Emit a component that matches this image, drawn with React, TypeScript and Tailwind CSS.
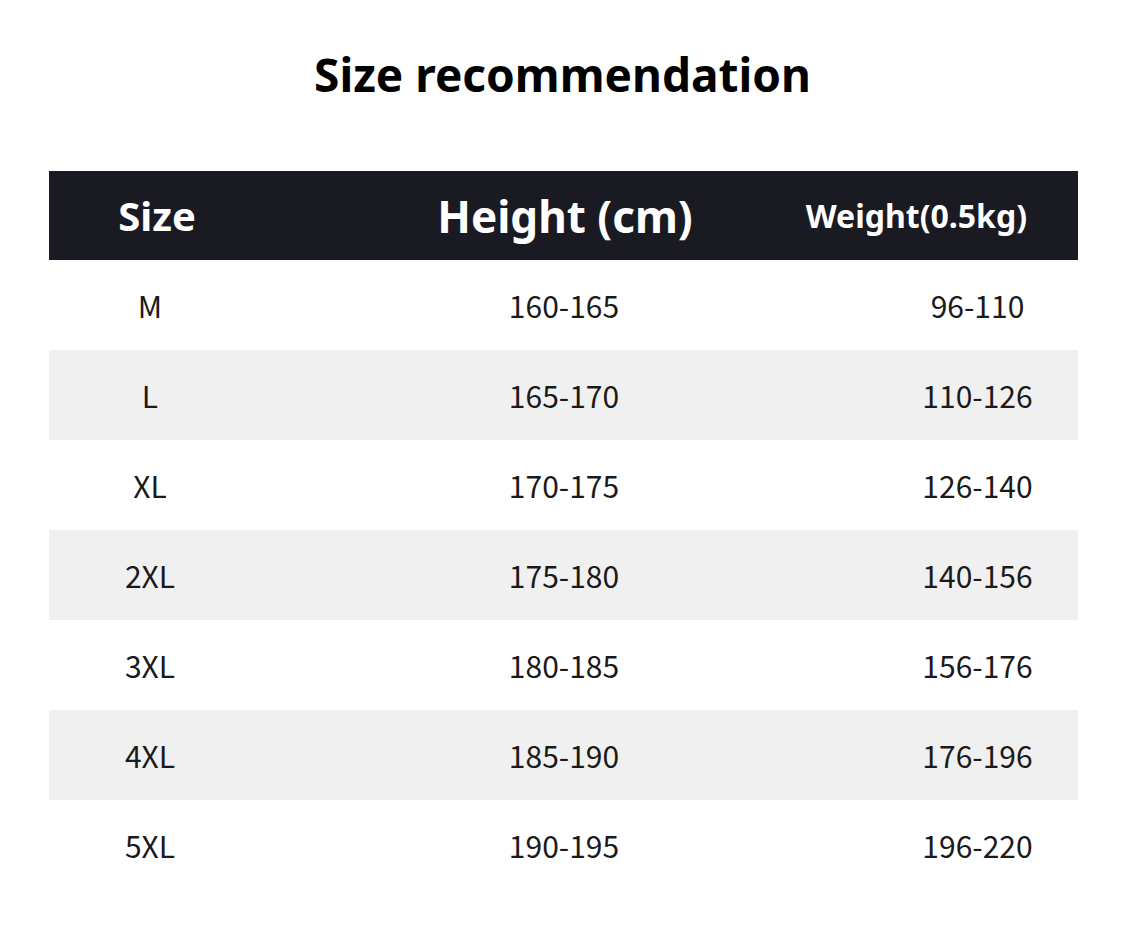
const rows = [
  { size: "M", height: "160-165", weight: "96-110" },
  { size: "L", height: "165-170", weight: "110-126" },
  { size: "XL", height: "170-175", weight: "126-140" },
  { size: "2XL", height: "175-180", weight: "140-156" },
  { size: "3XL", height: "180-185", weight: "156-176" },
  { size: "4XL", height: "185-190", weight: "176-196" },
  { size: "5XL", height: "190-195", weight: "196-220" },
]

const App = () => {
  return (
    <div className="w-[1125px] h-[937px] bg-white pt-[51px]">
      {/* Title */}
      <h1 className="text-center font-['Noto_Sans',sans-serif] font-bold text-[46px] leading-[46px] text-black">
        Size recommendation
      </h1>

      <div className="ml-[49px] mt-[74px] w-[1029px]">
        {/* Header */}
        <div className="flex h-[89px] items-center bg-[#1a1a22] text-white font-['Noto_Sans',sans-serif] font-bold">
          <div className="w-[216px] shrink-0 text-center text-[40px]">Size</div>
          <div className="w-[600px] shrink-0 text-center text-[44px]">Height (cm)</div>
          <div className="flex min-w-0 flex-1 justify-end pr-[51px] whitespace-nowrap text-[32px]">Weight(0.5kg)</div>
        </div>

        {/* Rows */}
        {rows.map((r, i) => (
          <div
            key={r.size}
            className={`grid h-[90px] grid-cols-[202px_626px_201px] items-center text-[30px] text-[#1a1a1a] font-['Noto_Sans_CJK_SC',sans-serif] ${
              i % 2 === 1 ? "bg-[#f0f0f0]" : "bg-white"
            }`}
          >
            <div className="text-center">{r.size}</div>
            <div className="text-center">{r.height}</div>
            <div className="text-center">{r.weight}</div>
          </div>
        ))}
      </div>
    </div>
  )
}

export default App
